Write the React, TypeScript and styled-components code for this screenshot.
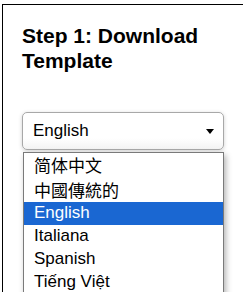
import styled, { createGlobalStyle } from "styled-components";

const GlobalStyle = createGlobalStyle`
    html, body {
        margin: 0;
        padding: 0;
        background: #fff;
        overflow: hidden;
    }
    body {
        font-family: "Liberation Sans", Arial, "Noto Sans CJK SC", sans-serif;
        color: #000;
    }
`;

const Card = styled.section`
    margin: 4px 0 0 2px;
    width: 300px;
    height: 400px;
    border: 1px solid #000;
    padding: 18px 19px 0 19px;
    box-sizing: border-box;
`;

const Heading = styled.h2`
    margin: 0;
    width: 202px;
    font-size: 21px;
    line-height: 25px;
    font-weight: 700;
`;

const SelectWrap = styled.div`
    position: relative;
    margin-top: 39px;
    width: 202px;
`;

const SelectBox = styled.div`
    display: flex;
    align-items: center;
    justify-content: space-between;
    height: 38px;
    box-sizing: border-box;
    padding: 0 9px 0 10px;
    border: 1px solid #a8a8a8;
    border-radius: 5px;
    background: linear-gradient(#fff 70%, #f3f3f3);
    box-shadow: 0 1px 4px rgba(0, 0, 0, 0.18);
    font-size: 17px;
`;

const Caret = styled.span`
    width: 0;
    height: 0;
    border-left: 4.5px solid transparent;
    border-right: 4.5px solid transparent;
    border-top: 5px solid #000;
    margin-top: 1px;
`;

const OptionList = styled.ul`
    position: absolute;
    top: 40px;
    left: 1px;
    width: 201px;
    box-sizing: border-box;
    margin: 0;
    padding: 0;
    list-style: none;
    background: #fff;
    border: 1px solid #7a7a7a;
    box-shadow: 2px 3px 6px rgba(0, 0, 0, 0.3);
`;

const Option = styled.li<{ $selected?: boolean; $tall?: boolean }>`
    height: ${p => (p.$tall ? "24.5px" : "23px")};
    line-height: ${p => (p.$tall ? "24.5px" : "22px")};
    padding-left: 10px;
    font-size: 17px;
    white-space: nowrap;
    font-family: ${p => (p.$tall ? '"Noto Sans CJK SC", "Noto Sans CJK TC", sans-serif' : '"Liberation Sans", Arial, sans-serif')};
    background: ${p => (p.$selected ? "#1a67d2" : "transparent")};
    color: ${p => (p.$selected ? "#fff" : "#000")};
`;

const languages = [
    { label: "简体中文", tall: true },
    { label: "中國傳統的", tall: true },
    { label: "English" },
    { label: "Italiana" },
    { label: "Spanish" },
    { label: "Tiếng Việt" },
];

export default function App() {
    const selected = "English";

    return (
        <>
            <GlobalStyle />
            <Card>
                <Heading>Step 1: Download Template</Heading>
                <SelectWrap>
                    <SelectBox>
                        <span>{selected}</span>
                        <Caret />
                    </SelectBox>
                    <OptionList>
                        {languages.map(lang => (
                            <Option key={lang.label} $tall={lang.tall} $selected={lang.label === selected}>
                                {lang.label}
                            </Option>
                        ))}
                    </OptionList>
                </SelectWrap>
            </Card>
        </>
    );
}
